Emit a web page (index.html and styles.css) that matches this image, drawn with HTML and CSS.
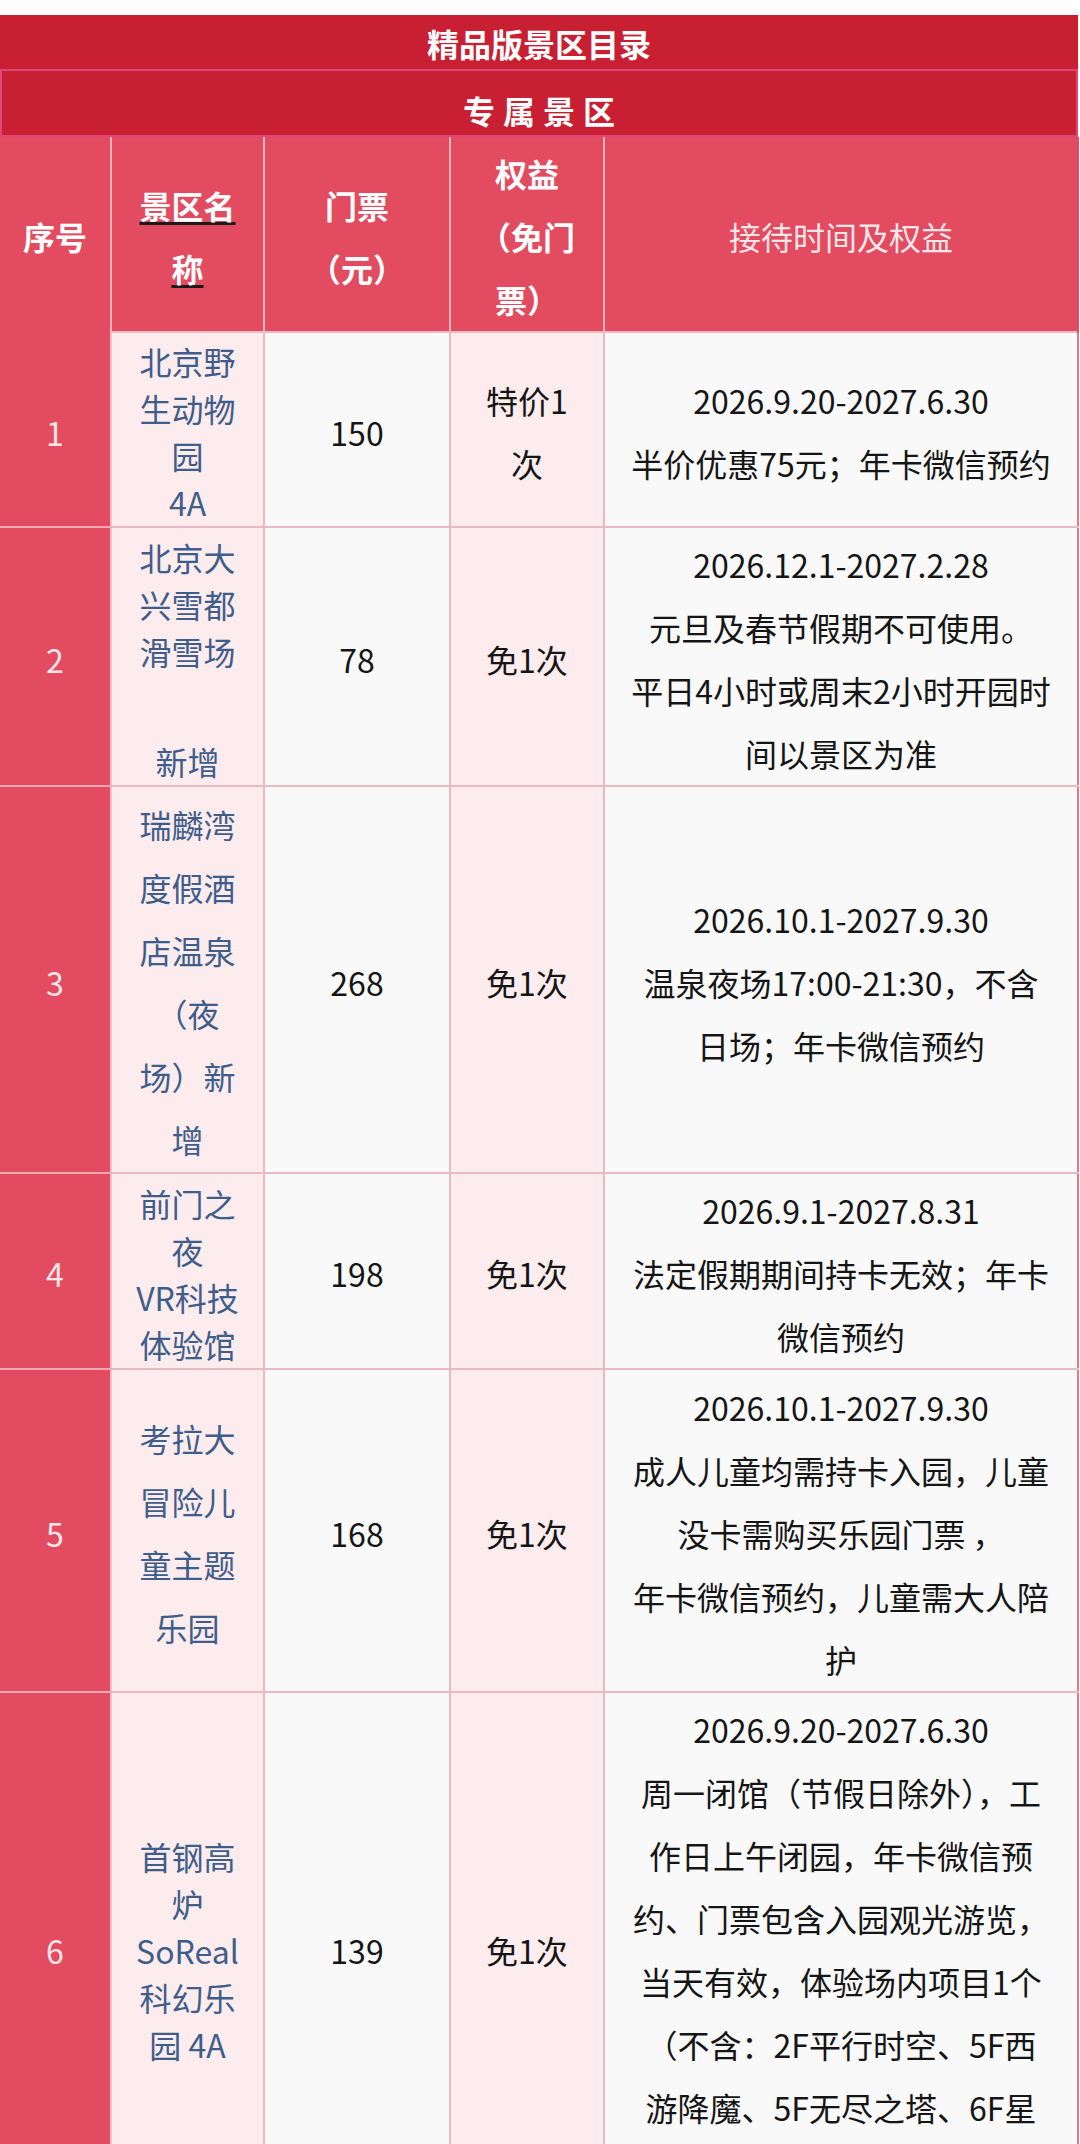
FILE: index.html
```html
<!DOCTYPE html>
<html lang="zh-CN">
<head>
<meta charset="utf-8">
<title>精品版景区目录</title>
<link rel="stylesheet" href="styles.css">
</head>
<body>
<div class="page">
  <div class="title">精品版景区目录</div>
  <div class="subtitle">专属景区</div>
  <table class="grid">
    <colgroup>
      <col class="w-no">
      <col class="w-name">
      <col class="w-price">
      <col class="w-right">
      <col class="w-detail">
    </colgroup>
    <thead>
      <tr class="hd">
        <th class="h-no">序号</th>
        <th><span class="ln"><span class="ul">景区名</span></span><span class="ln"><span class="ul">称</span></span></th>
        <th><span class="ln">门票</span><span class="ln">（元）</span></th>
        <th><span class="ln">权益</span><span class="ln">（免门</span><span class="ln">票）</span></th>
        <th class="h-detail">接待时间及权益</th>
      </tr>
    </thead>
    <tbody>
      <tr class="r1">
        <td class="no">1</td>
        <td class="nm lh-s"><span class="ln">北京野</span><span class="ln">生动物</span><span class="ln">园</span><span class="ln">4A</span></td>
        <td class="pr">150</td>
        <td class="bf"><span class="ln">特价1</span><span class="ln">次</span></td>
        <td class="dt"><span class="ln">2026.9.20-2027.6.30</span><span class="ln">半价优惠75元；年卡微信预约</span></td>
      </tr>
      <tr class="r2">
        <td class="no">2</td>
        <td class="nm lh-s"><span class="ln">北京大</span><span class="ln">兴雪都</span><span class="ln">滑雪场</span><span class="ln gap">新增</span></td>
        <td class="pr">78</td>
        <td class="bf">免1次</td>
        <td class="dt"><span class="ln">2026.12.1-2027.2.28</span><span class="ln">元旦及春节假期不可使用。</span><span class="ln">平日4小时或周末2小时开园时</span><span class="ln">间以景区为准</span></td>
      </tr>
      <tr class="r3">
        <td class="no">3</td>
        <td class="nm lh-m"><span class="ln">瑞麟湾</span><span class="ln">度假酒</span><span class="ln">店温泉</span><span class="ln">（夜</span><span class="ln">场）新</span><span class="ln">增</span></td>
        <td class="pr">268</td>
        <td class="bf">免1次</td>
        <td class="dt"><span class="ln">2026.10.1-2027.9.30</span><span class="ln">温泉夜场17:00-21:30，不含</span><span class="ln">日场；年卡微信预约</span></td>
      </tr>
      <tr class="r4">
        <td class="no">4</td>
        <td class="nm lh-s"><span class="ln">前门之</span><span class="ln">夜</span><span class="ln">VR科技</span><span class="ln">体验馆</span></td>
        <td class="pr">198</td>
        <td class="bf">免1次</td>
        <td class="dt"><span class="ln">2026.9.1-2027.8.31</span><span class="ln">法定假期期间持卡无效；年卡</span><span class="ln">微信预约</span></td>
      </tr>
      <tr class="r5">
        <td class="no">5</td>
        <td class="nm lh-m"><span class="ln">考拉大</span><span class="ln">冒险儿</span><span class="ln">童主题</span><span class="ln">乐园</span></td>
        <td class="pr">168</td>
        <td class="bf">免1次</td>
        <td class="dt"><span class="ln">2026.10.1-2027.9.30</span><span class="ln">成人儿童均需持卡入园，儿童</span><span class="ln">没卡需购买乐园门票 ，</span><span class="ln">年卡微信预约，儿童需大人陪</span><span class="ln">护</span></td>
      </tr>
      <tr class="r6">
        <td class="no">6</td>
        <td class="nm lh-s"><span class="ln">首钢高</span><span class="ln">炉</span><span class="ln">SoReal</span><span class="ln">科幻乐</span><span class="ln">园 4A</span></td>
        <td class="pr">139</td>
        <td class="bf">免1次</td>
        <td class="dt"><span class="ln">2026.9.20-2027.6.30</span><span class="ln">周一闭馆（节假日除外），工</span><span class="ln">作日上午闭园，年卡微信预</span><span class="ln">约、门票包含入园观光游览，</span><span class="ln">当天有效，体验场内项目1个</span><span class="ln">（不含：2F平行时空、5F西</span><span class="ln">游降魔、5F无尽之塔、6F星</span><span class="ln">际穿越）</span></td>
      </tr>
    </tbody>
  </table>
</div>
</body>
</html>
```

FILE: styles.css
```css
* { box-sizing: border-box; }
html, body {
  margin: 0;
  padding: 0;
  overflow: hidden;
}
body {
  width: 1080px;
  height: 2144px;
  background: #ffffff;
  font-family: "Noto Sans CJK SC", "Noto Sans", sans-serif;
  color: #151515;
}
.page {
  padding-top: 15px;
  width: 1078px;
}
.title {
  height: 54px;
  padding-top: 3px;
  line-height: 51px;
  background: #c81f33;
  color: #ffffff;
  font-size: 32px;
  font-weight: 700;
  text-align: center;
}
.subtitle {
  height: 68px;
  padding-top: 16px;
  padding-left: 8px;
  line-height: 46px;
  background: #c81f33;
  border: 2px solid #e0457a;
  color: #ffffff;
  font-size: 32px;
  font-weight: 700;
  letter-spacing: 8px;
  text-align: center;
}
.grid {
  width: 1078px;
  border-collapse: collapse;
  table-layout: fixed;
}
.w-no { width: 111px; }
.w-name { width: 153px; }
.w-price { width: 186px; }
.w-right { width: 154px; }
.w-detail { width: 474px; }

th, td {
  padding: 5px 0 0;
  text-align: center;
  vertical-align: middle;
  font-size: 32px;
  font-weight: 400;
}
.ln {
  display: block;
}
.hd { height: 195px; }
th {
  background: #e24b60;
  color: #ffffff;
  font-weight: 700;
  line-height: 63px;
  border-left: 2px solid #f4b3bd;
  border-right: 2px solid #f4b3bd;
}
th.h-no { border-left: none; }
th.h-detail {
  font-weight: 400;
  color: #fde6e9;
  border-right: 2px solid #e24b60;
}
.ul {
  text-decoration: underline;
  text-decoration-color: #1a1a1a;
  text-decoration-thickness: 3px;
  text-underline-offset: 3px;
}

td {
  border: 2px solid #e9b9c4;
  line-height: 63px;
}
td.no {
  background: #e24b60;
  color: #fde6e9;
  border-left: none;
  border-top: 2px solid #f3a8b4;
  border-bottom: 2px solid #f3a8b4;
  border-right: 2px solid #f0c2ca;
}
tbody tr:first-child td.no { border-top-color: #e24b60; }
td.nm {
  background: #fcecee;
  color: #3f5d8b;
}
td.pr { background: #f9f9f9; }
td.bf { background: #fcecee; }
td.dt {
  background: #f9f9f9;
  border-right: 2px solid #e07a8c;
}
.lh-s { line-height: 47px; }
.lh-m { line-height: 63px; }
.gap { margin-top: 63px; }

.r1 { height: 193px; }
.r2 { height: 257px; }
.r3 { height: 387px; }
.r4 { height: 193px; }
.r5 { height: 323px; }
.r6 { height: 504px; }
```
